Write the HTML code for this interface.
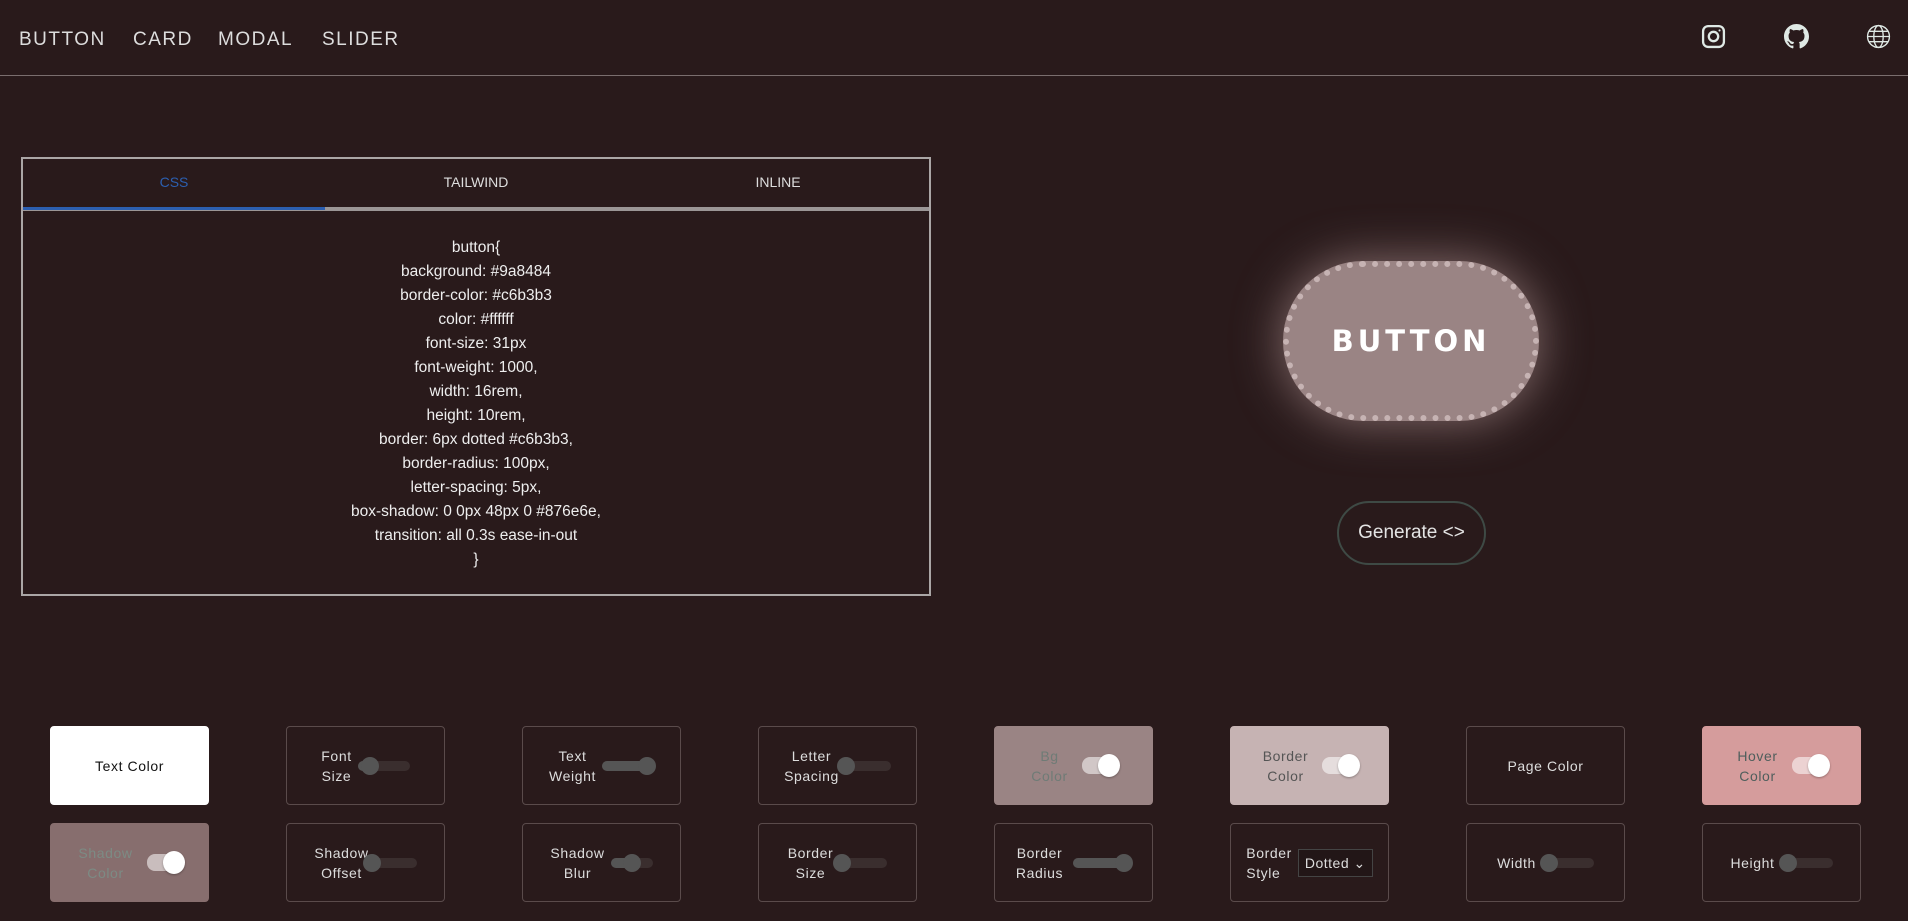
<!DOCTYPE html>
<html><head><meta charset="utf-8"><style>
*{box-sizing:border-box;margin:0;padding:0}
body{width:1908px;height:921px;background:#291a1b;font-family:"Liberation Sans",sans-serif;color:#ddd;position:relative;overflow:hidden}
.nav{position:absolute;left:19px;top:29px;font-size:19px;letter-spacing:1.5px;color:#ddd}
.nav span{position:absolute;white-space:nowrap}
.hr{position:absolute;left:0;top:75px;width:1908px;height:1px;background:#7a6e6e}
.ic{position:absolute;top:24px}
.box{position:absolute;left:21px;top:157px;width:910px;height:439px;border:2px solid #aaa6a6}
.tabs{position:relative;height:48px}
.tabs div{position:absolute;top:15px;width:302px;text-align:center;font-size:14px}
.ul{position:absolute;left:0;top:48px;width:906px;height:4px;background:#9b9696}
.ulb{position:absolute;left:0;top:48px;width:302px;height:3px;background:#2c5fb0}
.code{position:absolute;top:77px;left:0;width:906px;text-align:center;font-size:15.5px;line-height:24px;color:#eee}
.pb{position:absolute;left:1283px;top:261px;width:256px;height:160px;background:#9a8484;border:6px dotted #c6b3b3;border-radius:100px;box-shadow:0 0 48px 0 #876e6e;color:#fff;font-size:29px;font-weight:900;letter-spacing:4px;display:flex;align-items:center;justify-content:center;font-family:"DejaVu Sans","Liberation Sans",sans-serif}
.gen{position:absolute;left:1337px;top:501px;width:149px;height:64px;border:2px solid #3e4a45;border-radius:32px;display:flex;align-items:center;justify-content:center;font-size:19px;color:#e4e4e4}
.card{position:absolute;width:159px;height:79px;border:1px solid #5a4b4b;border-radius:4px;display:flex;align-items:center;justify-content:center;gap:6px;font-size:14px;letter-spacing:.6px;line-height:20px;text-align:center}
.sl{position:relative;width:52px;height:10px;border-radius:5px;background:#3a2e2e}
.sl i{position:absolute;left:0;top:0;height:10px;border-radius:5px;background:#555}
.sl b{position:absolute;top:-4px;width:18px;height:18px;border-radius:50%;background:#555}
.tg{position:relative;width:34px;height:17px;border-radius:8px;background:rgba(255,255,255,.55);margin-left:8px}
.tg b{position:absolute;right:-4px;top:-3px;width:22px;height:23px;border-radius:50%;background:#fff;box-shadow:0 1px 2px rgba(0,0,0,.3)}
.sel{border:1px solid #444;background:#221617;font-size:14px;padding:3px 6px;letter-spacing:.5px;color:#ddd}
</style></head><body>
<div class="nav"><span style="left:0">BUTTON</span><span style="left:114px">CARD</span><span style="left:199px">MODAL</span><span style="left:303px">SLIDER</span></div>
<div class="hr"></div>
<svg class="ic" style="left:1701px" width="25" height="25" viewBox="0 0 24 24" fill="none" stroke="#dfe9e5" stroke-width="2.2"><rect x="2" y="2" width="20" height="20" rx="5"/><circle cx="12" cy="12" r="4.5"/><circle cx="17.8" cy="6.2" r="1" fill="#dfe9e5" stroke="none"/></svg>
<svg class="ic" style="left:1784px" width="25" height="25" viewBox="0 0 16 16" fill="#dfe9e5"><path d="M8 0C3.58 0 0 3.580 0 8c0 3.54 2.290 6.530 5.470 7.590.4.07.55-.17.55-.38 0-.19-.01-.82-.01-1.49-2.01.37-2.530-.49-2.690-.94-.09-.23-.48-.94-.82-1.130-.28-.15-.68-.52-.01-.53.63-.01 1.080.58 1.230.82.72 1.210 1.870.87 2.330.66.07-.52.28-.87.51-1.070-1.780-.2-3.640-.89-3.640-3.950 0-.87.31-1.590.82-2.150-.08-.2-.36-1.020.08-2.120 0 0 .67-.21 2.200.82.64-.18 1.320-.27 2-.27.68 0 1.360.09 2 .27 1.530-1.040 2.200-.82 2.200-.82.44 1.100.16 1.920.08 2.120.51.56.82 1.270.82 2.150 0 3.070-1.870 3.750-3.650 3.950.29.25.54.73.54 1.480 0 1.070-.01 1.930-.01 2.200 0 .21.15.46.55.38A8.013 8.013 0 0016 8c0-4.420-3.580-8-8-8z"/></svg>
<svg class="ic" style="left:1866px" width="25" height="25" viewBox="0 0 24 24" fill="none" stroke="#dfe9e5" stroke-width="1.3"><circle cx="12" cy="12" r="10.5"/><ellipse cx="12" cy="12" rx="4.5" ry="10.5"/><path d="M1.5 12h21M3 7h18M3 17h18"/></svg>

<div class="box">
<div class="tabs"><div style="left:0;color:#2c5fb0">CSS</div><div style="left:302px">TAILWIND</div><div style="left:604px">INLINE</div></div>
<div class="ul"></div><div class="ulb"></div>
<div class="code">button{<br>background: #9a8484<br>border-color: #c6b3b3<br>color: #ffffff<br>font-size: 31px<br>font-weight: 1000,<br>width: 16rem,<br>height: 10rem,<br>border: 6px dotted #c6b3b3,<br>border-radius: 100px,<br>letter-spacing: 5px,<br>box-shadow: 0 0px 48px 0 #876e6e,<br>transition: all 0.3s ease-in-out<br>}</div>
</div>

<div class="pb">BUTTON</div>
<div class="gen">Generate &lt;&gt;</div>

<div class="card" style="left:50px;top:726px;background:#fff;color:#111;border-color:#fff">Text Color</div>
<div class="card" style="left:286px;top:726px"><div>Font<br>Size</div><div class="sl"><i style="width:12px"></i><b style="left:3px"></b></div></div>
<div class="card" style="left:522px;top:726px"><div>Text<br>Weight</div><div class="sl"><i style="width:52px"></i><b style="left:36px"></b></div></div>
<div class="card" style="left:758px;top:726px"><div>Letter<br>Spacing</div><div class="sl" style="margin-left:-6px"><b style="left:-2px"></b></div></div>
<div class="card" style="left:994px;top:726px;background:#9a8484;border-color:#9a8484;color:#6f7b76"><div>Bg<br>Color</div><div class="tg"><b></b></div></div>
<div class="card" style="left:1230px;top:726px;background:#c6b3b3;border-color:#c6b3b3;color:#555"><div>Border<br>Color</div><div class="tg"><b></b></div></div>
<div class="card" style="left:1466px;top:726px">Page Color</div>
<div class="card" style="left:1702px;top:726px;background:#d59c9c;border-color:#d59c9c;color:#4f5e5c"><div>Hover<br>Color</div><div class="tg"><b></b></div></div>
<div class="card" style="left:50px;top:823px;background:#876e6e;border-color:#876e6e;color:#7c8b84"><div>Shadow<br>Color</div><div class="tg"><b></b></div></div>
<div class="card" style="left:286px;top:823px"><div>Shadow<br>Offset</div><div class="sl" style="margin-left:-10px"><b style="left:-2px"></b></div></div>
<div class="card" style="left:522px;top:823px"><div>Shadow<br>Blur</div><div class="sl" style="width:42px"><i style="width:22px"></i><b style="left:12px"></b></div></div>
<div class="card" style="left:758px;top:823px"><div>Border<br>Size</div><div class="sl" style="margin-left:-4px"><b style="left:-2px"></b></div></div>
<div class="card" style="left:994px;top:823px"><div>Border<br>Radius</div><div class="sl" style="width:58px;margin-left:4px"><i style="width:58px"></i><b style="left:42px"></b></div></div>
<div class="card" style="left:1230px;top:823px;gap:6px"><div style="text-align:left">Border<br>Style</div><div class="sel">Dotted &#8964;</div></div>
<div class="card" style="left:1466px;top:823px"><div>Width</div><div class="sl"><b style="left:-2px"></b></div></div>
<div class="card" style="left:1702px;top:823px"><div>Height</div><div class="sl"><b style="left:-2px"></b></div></div>
</body></html>
